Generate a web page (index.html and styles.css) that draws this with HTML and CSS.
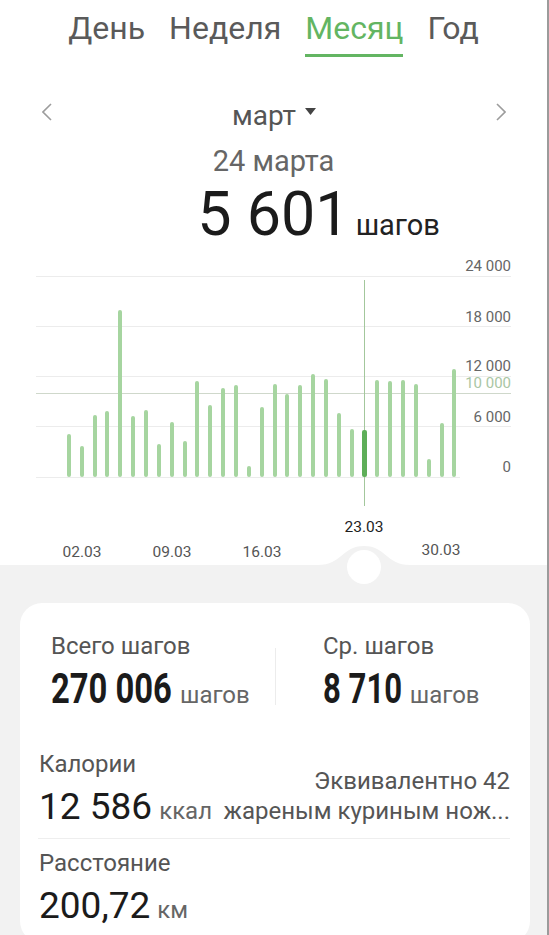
FILE: index.html
```html
<!DOCTYPE html>
<html lang="ru">

<head>
  <meta charset="UTF-8">
  <meta name="viewport" content="width=device-width, initial-scale=1.0">
  <title>Шаги</title>
  <link rel="stylesheet" href="styles.css">
</head>

<body>

  <div class="screen">

    <!-- Period tabs -->
    <nav class="tabs">
      <span class="tab">День</span>
      <span class="tab">Неделя</span>
      <span class="tab active">Месяц</span>
      <span class="tab">Год</span>
    </nav>

    <!-- Month switcher -->
    <div class="period">
      <svg class="chevron" viewBox="0 0 10 18"><polyline points="9,1 1,9 9,17" /></svg>
      <div class="month">
        март
        <svg class="caret" viewBox="0 0 11 8"><polygon points="0,0 11,0 5.5,7" /></svg>
      </div>
      <svg class="chevron" viewBox="0 0 10 18"><polyline points="1,1 9,9 1,17" /></svg>
    </div>

    <div class="day">24 марта</div>
    <div class="total">
      <span></span>
      <span class="total-num">5 601</span>
      <span class="total-unit">шагов</span>
    </div>

    <!-- Daily steps chart, drawn in page coordinates -->
    <svg class="chart" viewBox="0 250 547 340">
      <g class="grid">
        <line x1="36" y1="276.5" x2="511" y2="276.5" />
        <line x1="36" y1="326.5" x2="511" y2="326.5" />
        <line x1="36" y1="376.5" x2="511" y2="376.5" />
        <line x1="36" y1="426.5" x2="511" y2="426.5" />
        <line x1="36" y1="477.5" x2="460" y2="477.5" />
      </g>
      <line class="goal" x1="36" y1="393.5" x2="511" y2="393.5" />

      <g class="ylabels">
        <text x="511" y="271">24 000</text>
        <text x="511" y="322">18 000</text>
        <text x="511" y="371">12 000</text>
        <text class="goal-label" x="511" y="388">10 000</text>
        <text x="511" y="422">6 000</text>
        <text x="511" y="472">0</text>
      </g>

      <line class="cursor" x1="364.5" y1="280" x2="364.5" y2="506" />

      <g class="bars">
        <rect x="67" y="434" width="4" height="43" rx="2" />
        <rect x="80" y="446" width="4" height="31" rx="2" />
        <rect x="93" y="415" width="4" height="62" rx="2" />
        <rect x="105" y="411" width="4" height="66" rx="2" />
        <rect x="118" y="310" width="4" height="167" rx="2" />
        <rect x="131" y="416" width="4" height="61" rx="2" />
        <rect x="144" y="410" width="4" height="67" rx="2" />
        <rect x="157" y="444" width="4" height="33" rx="2" />
        <rect x="170" y="422" width="4" height="55" rx="2" />
        <rect x="183" y="441" width="4" height="36" rx="2" />
        <rect x="195" y="381" width="4" height="96" rx="2" />
        <rect x="208" y="405" width="4" height="72" rx="2" />
        <rect x="221" y="388" width="4" height="89" rx="2" />
        <rect x="234" y="385" width="4" height="92" rx="2" />
        <rect x="247" y="466" width="4" height="11" rx="2" />
        <rect x="260" y="407" width="4" height="70" rx="2" />
        <rect x="273" y="384" width="4" height="93" rx="2" />
        <rect x="285" y="394" width="4" height="83" rx="2" />
        <rect x="298" y="385" width="4" height="92" rx="2" />
        <rect x="311" y="374" width="4" height="103" rx="2" />
        <rect x="324" y="379" width="4" height="98" rx="2" />
        <rect x="337" y="413" width="4" height="64" rx="2" />
        <rect x="350" y="429" width="4" height="48" rx="2" />
        <rect class="selected" x="362" y="430" width="5" height="47" rx="2" />
        <rect x="375" y="380" width="4" height="97" rx="2" />
        <rect x="388" y="381" width="4" height="96" rx="2" />
        <rect x="401" y="380" width="4" height="97" rx="2" />
        <rect x="414" y="384" width="4" height="93" rx="2" />
        <rect x="427" y="459" width="4" height="18" rx="2" />
        <rect x="440" y="423" width="4" height="54" rx="2" />
        <rect x="452" y="369" width="4" height="108" rx="2" />
      </g>

      <g class="xlabels">
        <text x="82" y="557">02.03</text>
        <text x="172" y="557">09.03</text>
        <text x="262" y="557">16.03</text>
        <text x="441" y="555">30.03</text>
        <text class="current" x="364" y="532">23.03</text>
      </g>

      <!-- Grey sheet with the handle bump under the selected day -->
      <path class="sheet" d="M0,565 H318 C342,565 342,546 364,546 C386,546 386,565 410,565 H547 V590 H0 Z" />
      <circle class="handle" cx="364" cy="567" r="17" />
    </svg>

    <!-- Month summary -->
    <section class="summary">
      <div class="card">

        <div class="steps">
          <div class="stat">
            <div class="label">Всего шагов</div>
            <div class="value"><b class="sum">270 006</b><span class="unit">шагов</span></div>
          </div>
          <div class="vdiv"></div>
          <div class="stat">
            <div class="label">Ср. шагов</div>
            <div class="value"><b class="avg">8 710</b><span class="unit">шагов</span></div>
          </div>
        </div>

        <div class="kcal">
          <div>
            <div class="label">Калории</div>
            <div class="value"><span class="num">12 586</span><span class="unit">ккал</span></div>
          </div>
          <div class="equiv">Эквивалентно 42<br>жареным куриным нож...</div>
        </div>

        <div class="hdiv"></div>

        <div class="dist">
          <div class="label">Расстояние</div>
          <div class="value"><span class="num">200,72</span><span class="unit">км</span></div>
        </div>

      </div>
    </section>

  </div>

</body>

</html>
```

FILE: styles.css
```css
* {
  box-sizing: border-box;
}

body {
  margin: 0;
  background: #fff;
  font-family: Roboto, "Noto Sans", sans-serif;
}

.screen {
  width: 549px;
  height: 935px;
  overflow: hidden;
  background: #fff;
  border-right: 2px solid #9b9b9b;
}

/* Tabs */
.tabs {
  display: flex;
  justify-content: center;
  gap: 24px;
  padding-top: 10px;
}
.tab {
  font-size: 32px;
  line-height: 36px;
  color: #5a5a5a;
  padding-bottom: 8px;
  border-bottom: 3px solid transparent;
}
.tab.active {
  color: #63b562;
  border-color: #63b562;
}

/* Month switcher */
.period {
  display: flex;
  align-items: center;
  justify-content: space-between;
  height: 40px;
  margin-top: 38px;
  padding: 0 41px 0 42px;
}
.chevron {
  width: 10px;
  height: 18px;
  margin-top: -6px;
}
.chevron polyline {
  fill: none;
  stroke: #9c9c9c;
  stroke-width: 1.6;
}
.month {
  display: flex;
  align-items: center;
  gap: 9px;
  font-size: 28px;
  color: #555;
}
.caret {
  width: 11px;
  height: 8px;
  margin-bottom: 6px;
}
.caret polygon {
  fill: #444;
}

.day {
  margin-top: 9px;
  text-align: center;
  font-size: 29px;
  line-height: 34px;
  color: #666;
}

.total {
  display: grid;
  grid-template-columns: 1fr auto 1fr;
  align-items: baseline;
  height: 62px;
  margin-top: 5px;
}
.total-num {
  font-size: 61px;
  line-height: 62px;
  color: #1b1b1b;
}
.total-unit {
  padding-left: 6px;
  font-size: 29px;
  color: #222;
}

/* Chart */
.chart {
  display: block;
  width: 547px;
  height: 340px;
  margin-top: 5px;
}
.grid line {
  stroke: #ececec;
  stroke-width: 1;
}
.goal {
  stroke: #cfd8cb;
  stroke-width: 1;
}
.ylabels text {
  font-size: 15px;
  fill: #666;
  text-anchor: end;
}
.ylabels .goal-label {
  fill: #a9c6a4;
}
.cursor {
  stroke: #a3c79c;
  stroke-width: 1;
}
.bars rect {
  fill: #a6d5a0;
}
.bars .selected {
  fill: #5eae58;
}
.xlabels text {
  font-size: 15.5px;
  fill: #555;
  text-anchor: middle;
}
.xlabels .current {
  fill: #1e1e1e;
}
.sheet {
  fill: #f2f2f2;
}
.handle {
  fill: #fff;
}

/* Summary card */
.summary {
  height: 345px;
  background: #f2f2f2;
  padding: 13px 17px 0 20px;
}
.card {
  height: 340px;
  background: #fff;
  border-radius: 22px;
  padding: 29px 20px 0 19px;
}

.label {
  font-size: 24px;
  line-height: 28px;
  color: #555;
}
.value {
  margin-top: 7px;
  line-height: 44px;
  color: #1b1b1b;
  white-space: nowrap;
}
/* condensed bold totals */
.value b {
  display: inline-block;
  font-weight: 700;
  font-size: 42px;
  transform: scaleX(0.78);
  transform-origin: left center;
}
.value b.sum {
  margin-right: -33px;
}
.value b.avg {
  transform: scaleX(0.74);
  margin-right: -27px;
}
.value .num {
  font-size: 37px;
}
.unit {
  margin-left: 7px;
  font-size: 24px;
  color: #666;
}

.steps {
  display: grid;
  grid-template-columns: 236px 1px 1fr;
  align-items: center;
}
.steps .stat:first-child {
  padding-left: 12px;
}
.steps .stat:last-child {
  padding-left: 47px;
}
.vdiv {
  height: 57px;
  background: #ececec;
}

.kcal {
  display: flex;
  justify-content: space-between;
  align-items: flex-end;
  margin-top: 30px;
}
.equiv {
  font-size: 24px;
  line-height: 30px;
  color: #555;
  text-align: right;
  white-space: nowrap;
  padding-bottom: 10px;
}

.hdiv {
  height: 1px;
  margin: 2px 0 0 -1px;
  background: #eeeeee;
}

.dist {
  margin-top: 10px;
}
```
